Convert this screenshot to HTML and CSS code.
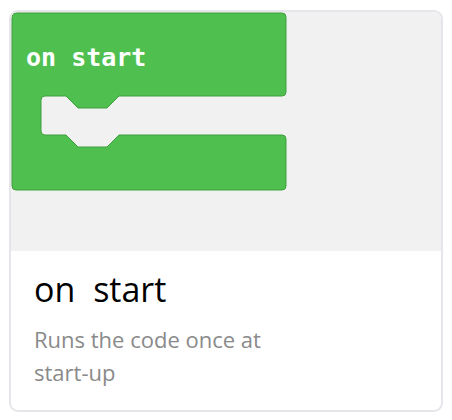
FILE: index.html
```html
<!DOCTYPE html>
<html>
<head>
<meta charset="utf-8">
<link rel="stylesheet" href="styles.css">
</head>
<body>
<div class="card">
  <div class="preview">
    <svg class="block" width="276" height="179" viewBox="-1 -1 276 179">
      <path d="M4,0 H270 A4,4 0 0 1 274,4 V79 A4,4 0 0 1 270,83 H107 L95,95 H66 L54,83 H33 A4,4 0 0 0 29,87 V118 A4,4 0 0 0 33,122 H54 L66,134 H95 L107,122 H270 A4,4 0 0 1 274,126 V173 A4,4 0 0 1 270,177 H4 A4,4 0 0 1 0,173 V4 A4,4 0 0 1 4,0 Z" fill="#4fbf50" stroke="#3f9f3f" stroke-width="1"/>
      <text x="14" y="53" class="block-label">on start</text>
    </svg>
  </div>
  <div class="info">
    <div class="title">on start</div>
    <div class="desc">Runs the code once at <span class="nowrap">start-up</span></div>
  </div>
</div>
</body>
</html>
```
FILE: styles.css
```css
html, body {
  margin: 0;
  padding: 0;
  background: #ffffff;
}
body {
  padding: 10px 9px;
  font-family: "Open Sans", "Noto Sans", sans-serif;
}
.card {
  width: 430px;
  height: 398px;
  border: 2px solid #e6e6ea;
  border-radius: 9px;
  overflow: hidden;
  background: #ffffff;
  display: flex;
  flex-direction: column;
}
.preview {
  height: 239px;
  background: #f1f1f2;
  flex: none;
}
.block {
  display: block;
}
.block-label {
  font-family: "DejaVu Sans Mono", monospace;
  font-weight: bold;
  font-size: 25px;
  fill: #ffffff;
}
.info {
  padding: 14px 23px 0;
}
.title {
  font-size: 34px;
  line-height: 48px;
  color: #000000;
  word-spacing: 9px;
}
.desc {
  margin-top: 10px;
  width: 280px;
  font-size: 22px;
  line-height: 33px;
  color: #8a8a8a;
}
.nowrap {
  white-space: nowrap;
}
```
